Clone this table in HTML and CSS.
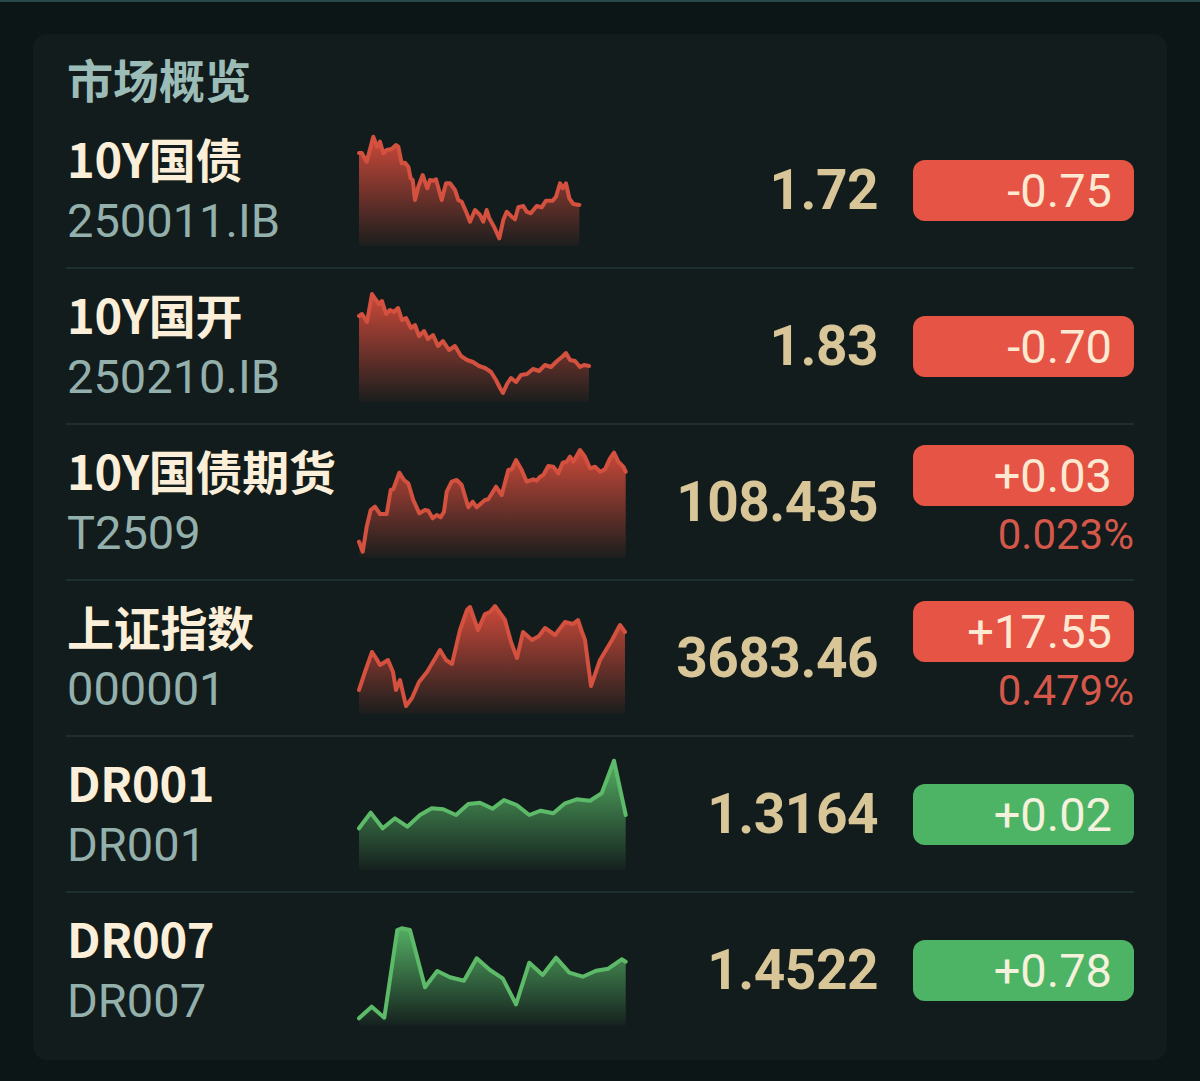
FILE: index.html
```html
<!DOCTYPE html>
<html lang="zh-CN">
<head>
<meta charset="utf-8">
<title>市场概览</title>
<link rel="stylesheet" href="styles.css">
</head>
<body>
<div class="topline"></div>
<section class="card">
  <h2 class="title">市场概览</h2>
  <div class="rows">

    <div class="row">
      <div class="info"><div class="name">10Y国债</div><div class="code">250011.IB</div></div>
      <svg class="spark" viewBox="0 0 267 112" width="267" height="112">
        <defs><linearGradient id="g1" x1="0" y1="0" x2="0" y2="1"><stop offset="0" stop-color="#d64b3b" stop-opacity="0.95"/><stop offset="1" stop-color="#d64b3b" stop-opacity="0.04"/></linearGradient></defs>
        <path class="area" fill="url(#g1)" d="M0,19 L2.7,19 L7.7,27.7 L14.3,2.7 L18,12.7 L21,7.7 L24.3,19.3 L27.7,16 L32.7,15 L37,11 L39.3,12.7 L42.7,29.3 L46,28.7 L49.3,32.7 L51.7,44.3 L53.7,46 L56,66 L59.3,52.7 L63.7,41 L68.3,54.3 L71,46 L74.3,46.7 L77,45.3 L82.7,66 L87,49.3 L91,49.3 L96,56 L99.3,66 L102.7,67.7 L107.7,79.3 L111,87.7 L116,76 L121,81 L124.3,87.7 L127.7,76 L130.3,84.3 L135,92.7 L140.3,104.3 L144.3,86 L147.7,77.7 L152.7,82.7 L156,85.3 L159.3,73.3 L164.3,72 L167.7,77.7 L171.7,79.3 L177.7,72 L182.7,73.3 L187,66.7 L193.7,66.7 L197,62.7 L201,49.3 L203.7,54.3 L207,49.3 L210.3,64.3 L214.3,70 L220.3,71 L220.3,112 L0,112 Z"/>
        <path class="line red" d="M0,19 L2.7,19 L7.7,27.7 L14.3,2.7 L18,12.7 L21,7.7 L24.3,19.3 L27.7,16 L32.7,15 L37,11 L39.3,12.7 L42.7,29.3 L46,28.7 L49.3,32.7 L51.7,44.3 L53.7,46 L56,66 L59.3,52.7 L63.7,41 L68.3,54.3 L71,46 L74.3,46.7 L77,45.3 L82.7,66 L87,49.3 L91,49.3 L96,56 L99.3,66 L102.7,67.7 L107.7,79.3 L111,87.7 L116,76 L121,81 L124.3,87.7 L127.7,76 L130.3,84.3 L135,92.7 L140.3,104.3 L144.3,86 L147.7,77.7 L152.7,82.7 L156,85.3 L159.3,73.3 L164.3,72 L167.7,77.7 L171.7,79.3 L177.7,72 L182.7,73.3 L187,66.7 L193.7,66.7 L197,62.7 L201,49.3 L203.7,54.3 L207,49.3 L210.3,64.3 L214.3,70 L220.3,71"/>
      </svg>
      <div class="price">1.72</div>
      <div class="change"><div class="badge red">-0.75</div></div>
    </div>

    <div class="row">
      <div class="info"><div class="name">10Y国开</div><div class="code">250210.IB</div></div>
      <svg class="spark" viewBox="0 0 267 112" width="267" height="112">
        <defs><linearGradient id="g2" x1="0" y1="0" x2="0" y2="1"><stop offset="0" stop-color="#d64b3b" stop-opacity="0.95"/><stop offset="1" stop-color="#d64b3b" stop-opacity="0.04"/></linearGradient></defs>
        <path class="area" fill="url(#g2)" d="M0,26 L3,24 L8,32 L13,4 L17,10 L20,14 L23,11 L27,24 L31,20 L35,22 L39,18 L43,30 L47,28 L52,38 L56,35 L60,46 L65,41 L69,49 L74,45 L79,56 L84,51 L90,60 L96,56 L102,66 L108,70 L114,72 L120,76 L126,78 L132,82 L137,90 L141,98 L144,103 L148,94 L152,88 L157,92 L162,85 L168,84 L174,79 L180,81 L186,75 L192,77 L198,71 L203,67 L207,63 L211,70 L216,71 L221,77 L225,75 L230,76 L230,112 L0,112 Z"/>
        <path class="line red" d="M0,26 L3,24 L8,32 L13,4 L17,10 L20,14 L23,11 L27,24 L31,20 L35,22 L39,18 L43,30 L47,28 L52,38 L56,35 L60,46 L65,41 L69,49 L74,45 L79,56 L84,51 L90,60 L96,56 L102,66 L108,70 L114,72 L120,76 L126,78 L132,82 L137,90 L141,98 L144,103 L148,94 L152,88 L157,92 L162,85 L168,84 L174,79 L180,81 L186,75 L192,77 L198,71 L203,67 L207,63 L211,70 L216,71 L221,77 L225,75 L230,76"/>
      </svg>
      <div class="price">1.83</div>
      <div class="change"><div class="badge red">-0.70</div></div>
    </div>

    <div class="row">
      <div class="info"><div class="name">10Y国债期货</div><div class="code">T2509</div></div>
      <svg class="spark" viewBox="0 0 267 112" width="267" height="112">
        <defs><linearGradient id="g3" x1="0" y1="0" x2="0" y2="1"><stop offset="0" stop-color="#d64b3b" stop-opacity="0.95"/><stop offset="1" stop-color="#d64b3b" stop-opacity="0.04"/></linearGradient></defs>
        <path class="area" fill="url(#g3)" d="M0,95.7 L3.7,105.7 L7.7,80.7 L11.7,64 L16,60.7 L21,68 L27.7,68 L31.7,44 L34.3,43.3 L40.3,26.7 L45,34 L49.3,37.3 L54.3,54 L60.3,67.3 L66,64 L69.3,64.7 L73.7,72.3 L77.7,69 L81.7,71.3 L85,65.7 L87.7,45.7 L92.7,35.7 L97.7,34 L102.7,39 L109.3,61.3 L113.7,55.7 L117.7,61.3 L126,54 L129.3,53.3 L137,40.7 L142.7,49 L149.3,24 L152.7,23.3 L157,14 L162.7,24 L167.7,35.7 L174.3,33.3 L177.7,34.7 L181,30.7 L184.3,29 L189.3,20 L194.3,20.7 L199.3,27.3 L203.7,16.7 L207.7,15.7 L211,10.7 L214.3,15.7 L221,4 L226,10.7 L231,22.3 L236,20.7 L241,25.7 L246,23.3 L251,12.3 L255,6.7 L259.3,15.7 L264.3,20.7 L266.7,25.7 L266.7,112 L0,112 Z"/>
        <path class="line red" d="M0,95.7 L3.7,105.7 L7.7,80.7 L11.7,64 L16,60.7 L21,68 L27.7,68 L31.7,44 L34.3,43.3 L40.3,26.7 L45,34 L49.3,37.3 L54.3,54 L60.3,67.3 L66,64 L69.3,64.7 L73.7,72.3 L77.7,69 L81.7,71.3 L85,65.7 L87.7,45.7 L92.7,35.7 L97.7,34 L102.7,39 L109.3,61.3 L113.7,55.7 L117.7,61.3 L126,54 L129.3,53.3 L137,40.7 L142.7,49 L149.3,24 L152.7,23.3 L157,14 L162.7,24 L167.7,35.7 L174.3,33.3 L177.7,34.7 L181,30.7 L184.3,29 L189.3,20 L194.3,20.7 L199.3,27.3 L203.7,16.7 L207.7,15.7 L211,10.7 L214.3,15.7 L221,4 L226,10.7 L231,22.3 L236,20.7 L241,25.7 L246,23.3 L251,12.3 L255,6.7 L259.3,15.7 L264.3,20.7 L266.7,25.7"/>
      </svg>
      <div class="price">108.435</div>
      <div class="change"><div class="badge red">+0.03</div><div class="pct">0.023%</div></div>
    </div>

    <div class="row">
      <div class="info"><div class="name">上证指数</div><div class="code">000001</div></div>
      <svg class="spark" viewBox="0 0 267 112" width="267" height="112">
        <defs><linearGradient id="g4" x1="0" y1="0" x2="0" y2="1"><stop offset="0" stop-color="#d64b3b" stop-opacity="0.95"/><stop offset="1" stop-color="#d64b3b" stop-opacity="0.04"/></linearGradient></defs>
        <path class="area" fill="url(#g4)" d="M0,88 L6,70 L13,50 L17,56 L21,63 L29,58 L34,70 L37,88 L41,78 L47,104 L53,96 L60,80 L68,70 L74,60 L81,48 L87,58 L93,62 L101,28 L108,8 L111,5 L119,28 L126,12 L131,10 L136,4 L146,18 L152,40 L158,56 L164,30 L173,38 L180,34 L186,26 L196,33 L206,20 L214,22 L219,18 L223,30 L226,38 L232,84 L241,58 L253,38 L261,23 L266,30 L266,112 L0,112 Z"/>
        <path class="line red" d="M0,88 L6,70 L13,50 L17,56 L21,63 L29,58 L34,70 L37,88 L41,78 L47,104 L53,96 L60,80 L68,70 L74,60 L81,48 L87,58 L93,62 L101,28 L108,8 L111,5 L119,28 L126,12 L131,10 L136,4 L146,18 L152,40 L158,56 L164,30 L173,38 L180,34 L186,26 L196,33 L206,20 L214,22 L219,18 L223,30 L226,38 L232,84 L241,58 L253,38 L261,23 L266,30"/>
      </svg>
      <div class="price">3683.46</div>
      <div class="change"><div class="badge red">+17.55</div><div class="pct">0.479%</div></div>
    </div>

    <div class="row">
      <div class="info"><div class="name">DR001</div><div class="code">DR001</div></div>
      <svg class="spark" viewBox="0 0 267 112" width="267" height="112">
        <defs><linearGradient id="g5" x1="0" y1="0" x2="0" y2="1"><stop offset="0" stop-color="#57b566" stop-opacity="0.95"/><stop offset="1" stop-color="#57b566" stop-opacity="0.03"/></linearGradient></defs>
        <path class="area" fill="url(#g5)" d="M0,70.3 L11.7,54.7 L23.7,70.3 L36,60.3 L48.3,68.7 L61,57 L72.7,50.3 L84.3,51.3 L97,57 L109.3,46 L121,44.7 L133.7,50.7 L145,42 L157.7,47 L170.3,57 L181.7,52.7 L194.3,55.3 L206,45.3 L217.7,41.3 L231,42.7 L242.7,35.3 L255,2.7 L266.7,57 L266.7,112 L0,112 Z"/>
        <path class="line green" d="M0,70.3 L11.7,54.7 L23.7,70.3 L36,60.3 L48.3,68.7 L61,57 L72.7,50.3 L84.3,51.3 L97,57 L109.3,46 L121,44.7 L133.7,50.7 L145,42 L157.7,47 L170.3,57 L181.7,52.7 L194.3,55.3 L206,45.3 L217.7,41.3 L231,42.7 L242.7,35.3 L255,2.7 L266.7,57"/>
      </svg>
      <div class="price">1.3164</div>
      <div class="change"><div class="badge green">+0.02</div></div>
    </div>

    <div class="row">
      <div class="info"><div class="name">DR007</div><div class="code">DR007</div></div>
      <svg class="spark" viewBox="0 0 267 112" width="267" height="112">
        <defs><linearGradient id="g6" x1="0" y1="0" x2="0" y2="1"><stop offset="0" stop-color="#57b566" stop-opacity="0.95"/><stop offset="1" stop-color="#57b566" stop-opacity="0.03"/></linearGradient></defs>
        <path class="area" fill="url(#g6)" d="M0,104.3 L12.7,92.7 L25.3,103.7 L38.3,16 L42.7,14.3 L51,16 L66,73.3 L78.3,57 L91,63.3 L105,66.7 L117.7,44.3 L131,56 L143.7,64.3 L157,90.3 L170.3,48.7 L183.7,61 L197,43.7 L210.3,58.7 L223.7,62.7 L237,56.7 L249.3,54.7 L262.7,45.3 L266.7,47.7 L266.7,112 L0,112 Z"/>
        <path class="line green" d="M0,104.3 L12.7,92.7 L25.3,103.7 L38.3,16 L42.7,14.3 L51,16 L66,73.3 L78.3,57 L91,63.3 L105,66.7 L117.7,44.3 L131,56 L143.7,64.3 L157,90.3 L170.3,48.7 L183.7,61 L197,43.7 L210.3,58.7 L223.7,62.7 L237,56.7 L249.3,54.7 L262.7,45.3 L266.7,47.7"/>
      </svg>
      <div class="price">1.4522</div>
      <div class="change"><div class="badge green">+0.78</div></div>
    </div>

  </div>
</section>
</body>
</html>
```

FILE: styles.css
```css
* { box-sizing: border-box; }

html, body {
  margin: 0;
  padding: 0;
  background: #0c1616;
  height: 1081px;
  overflow: hidden;
}

body {
  font-family: "Noto Sans CJK SC", "Noto Sans", sans-serif;
}

.topline {
  height: 2px;
  background: #29484a;
}

.card {
  margin: 32px 33px 0 33px;
  background: #131c1c;
  border-radius: 14px;
  padding: 14px 33px 13px 33px;
}

.title {
  margin: 0;
  padding-left: 1px;
  height: 65px;
  line-height: 61px;
  font-size: 46px;
  font-weight: 700;
  color: #9cbcb7;
}

.rows {
  display: flex;
  flex-direction: column;
}

.row {
  display: flex;
  align-items: center;
  height: 156px;
  border-bottom: 2px solid #1f2e30;
}

.row:last-child {
  border-bottom: none;
  height: 154px;
}

.info {
  width: 293px;
  flex: none;
  padding-left: 1px;
  padding-bottom: 3px;
}

.name {
  font-size: 47px;
  font-weight: 700;
  line-height: 61px;
  color: #fcefd9;
  white-space: nowrap;
  letter-spacing: -0.3px;
}

.code {
  font-family: "Roboto", "Noto Sans", sans-serif;
  font-size: 47px;
  font-weight: 400;
  line-height: 61px;
  padding-top: 2px;
  color: #93b0ac;
  white-space: nowrap;
}

.spark {
  flex: none;
  display: block;
  overflow: visible;
}

.spark .line {
  fill: none;
  stroke-width: 4;
  stroke-linejoin: round;
  stroke-linecap: round;
}

.spark .line.red { stroke: #d4513f; }
.spark .line.green { stroke: #5dba69; }

.price {
  flex: 1;
  text-align: right;
  font-family: "Roboto", "Liberation Sans", sans-serif;
  font-size: 55px;
  font-weight: 700;
  letter-spacing: -0.5px;
  color: #d8c698;
  white-space: nowrap;
}

.change {
  flex: none;
  width: 221px;
  margin-left: 35px;
  display: flex;
  flex-direction: column;
  align-items: stretch;
}

.badge {
  height: 61px;
  line-height: 61px;
  border-radius: 12px;
  text-align: right;
  padding-right: 22px;
  font-family: "Roboto", "Liberation Sans", sans-serif;
  font-size: 47px;
  font-weight: 400;
  color: #fde9d2;
}

.badge.red { background: #e55444; }
.badge.green { background: #4db465; color: #f4f1dc; }

.pct {
  margin-top: 4px;
  line-height: 50px;
  text-align: right;
  font-family: "Roboto", "Liberation Sans", sans-serif;
  font-size: 42px;
  font-weight: 400;
  color: #d5574a;
}
```
